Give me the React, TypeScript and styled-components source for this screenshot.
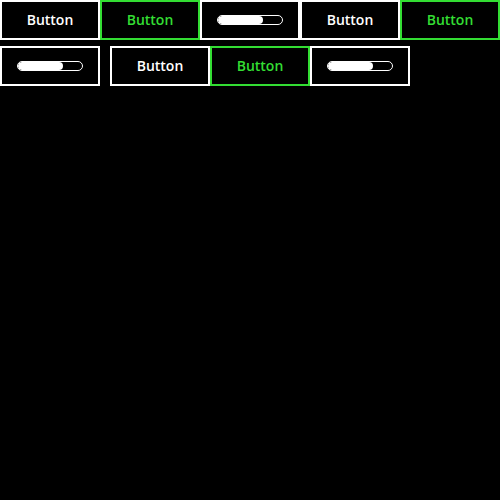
import styled, { createGlobalStyle } from 'styled-components';

const GlobalStyle = createGlobalStyle`
  body {
    margin: 0;
    background: #000;
    font-family: 'Open Sans', sans-serif;
  }
`;

const Grid = styled("div")`
  display: flex;
  flex-wrap: wrap;
  row-gap: 6px;
  width: 500px;
`;

const Tile = styled("div")<{ $green?: boolean; $gapAfter?: number }>`
  box-sizing: border-box;
  width: 100px;
  height: 40px;
  padding-bottom: 2px;
  border: 2px solid ${(p) => (p.$green ? '#33dd33' : '#fff')};
  color: ${(p) => (p.$green ? '#33dd33' : '#fff')};
  margin-right: ${(p) => p.$gapAfter ?? 0}px;
  display: flex;
  align-items: center;
  justify-content: center;
  font-size: 14px;
  font-weight: 600;
`;

const Track = styled("div")`
  box-sizing: border-box;
  width: 66px;
  height: 10px;
  margin-top: 2px;
  border: 1px solid #fff;
  border-radius: 5px;
  overflow: hidden;
`;

const Fill = styled("div")`
  height: 100%;
  background: #fff;
  border-radius: 5px;
`;

const Progress = ({ value }: { value: number }) => (
  <Track>
    <Fill style={{ width: `${value}%` }} />
  </Track>
);

const App = () => {
  return (
    <>
      <GlobalStyle />
      <Grid>
        <Tile>Button</Tile>
        <Tile $green>Button</Tile>
        <Tile><Progress value={71} /></Tile>
        <Tile>Button</Tile>
        <Tile $green>Button</Tile>
        <Tile $gapAfter={10}><Progress value={71} /></Tile>
        <Tile>Button</Tile>
        <Tile $green>Button</Tile>
        <Tile><Progress value={71} /></Tile>
      </Grid>
    </>
  );
};

export default App;
